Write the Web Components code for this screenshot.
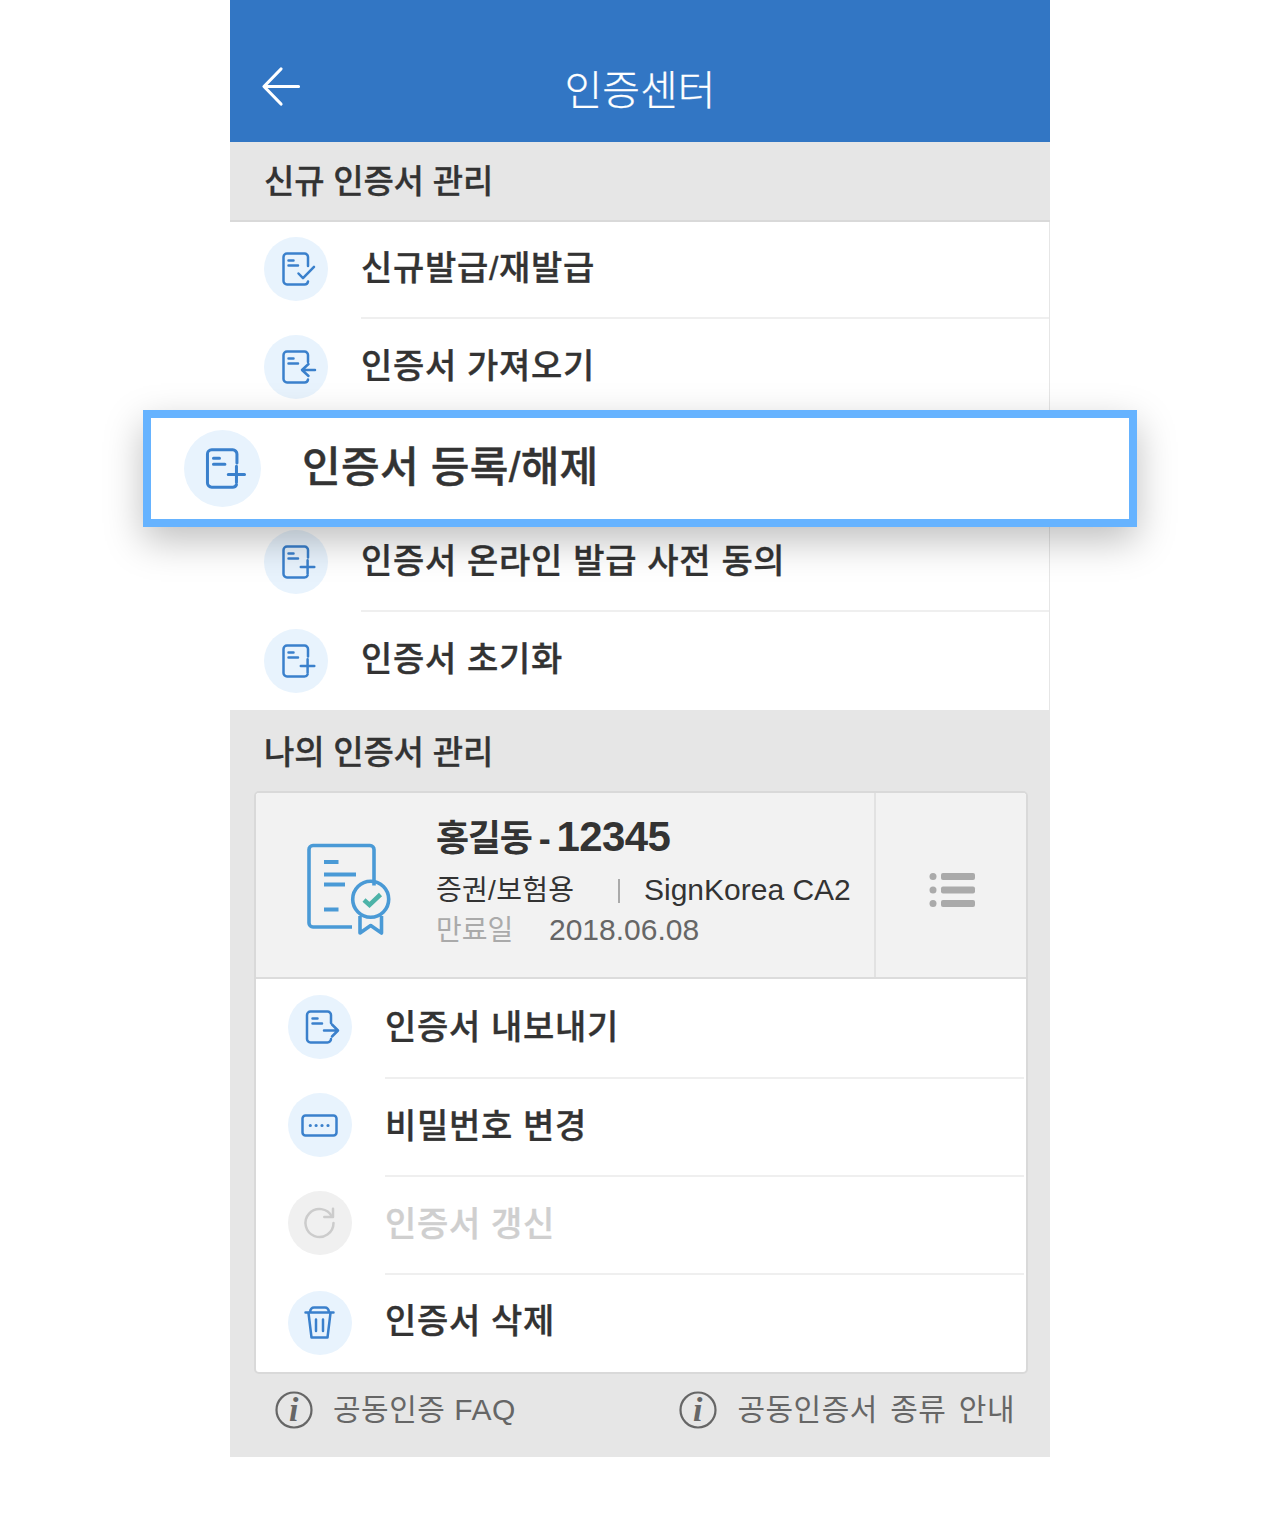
<!DOCTYPE html>
<html lang="ko">
<head>
<meta charset="utf-8">
<title>인증센터</title>
<style>
html, body { margin: 0; background: #fff; }
body {
  font-family: "Liberation Sans", "Noto Sans CJK KR", sans-serif;
  color: #333;
  height: 1525px;
  overflow: hidden;
}
cert-card b {
  font-size: 42px;
  font-weight: 700;
  letter-spacing: -.6px;
}
</style>
</head>
<body>
<cert-screen>
  <app-bar slot="bar">인증센터</app-bar>

  <section-head height="80">신규 인증서 관리</section-head>
  <menu-list>
    <menu-row icon="check" height="97" style="--lift:-4px">신규발급/재발급</menu-row>
    <menu-row icon="in">인증서 가져오기</menu-row>
    <menu-row height="97"></menu-row>
    <menu-row icon="plus">인증서 온라인 발급 사전 동의</menu-row>
    <menu-row icon="plus" last style="--lift:0px">인증서 초기화</menu-row>
  </menu-list>

  <section-head height="81" plain>나의 인증서 관리</section-head>
  <cert-card>
    <span slot="name">홍길동 - <b>12345</b></span>
    <span slot="usage">증권/보험용</span>
    <span slot="issuer">SignKorea CA2</span>
    <span slot="expiry">2018.06.08</span>
    <menu-row icon="out" height="100" inset style="--lift:-4px">인증서 내보내기</menu-row>
    <menu-row icon="keys" inset style="--lift:-6px">비밀번호 변경</menu-row>
    <menu-row icon="renew" inset disabled style="--lift:-6px">인증서 갱신</menu-row>
    <menu-row icon="trash" inset last>인증서 삭제</menu-row>
  </cert-card>

  <footer-links>
    <info-link>공동인증 FAQ</info-link>
    <info-link wide>공동인증서 종류 안내</info-link>
  </footer-links>

  <focus-row slot="overlay">인증서 등록/해제</focus-row>
</cert-screen>

<script>
"use strict";

const DOC_LINES = `<path d="M24.5 23.5h5M24.5 28.5h9.5"/>`;

// All menu icons share the same 64 unit grid, circle included.
const ICONS = {
  check: `<path d="M44 29v-9a3.5 3.5 0 0 0-3.5-3.5H23a3.5 3.5 0 0 0-3.5 3.5v24a3.5 3.5 0 0 0 3.5 3.5h17.5a3.5 3.5 0 0 0 3.5-3"/>${DOC_LINES}<path d="M34.5 36.5l4.5 4.700L50 29.800"/>`,
  in: `<path d="M44 27v-7a3.5 3.5 0 0 0-3.5-3.5H23a3.5 3.5 0 0 0-3.5 3.5v24a3.5 3.5 0 0 0 3.5 3.5h17.5a3.5 3.5 0 0 0 3.5-3"/>${DOC_LINES}<path d="M51 35H38.5M44.5 29l-6.500 6 6.500 6"/>`,
  plus: `<path d="M44 27.5V20a3.5 3.5 0 0 0-3.5-3.500H23a3.5 3.5 0 0 0-3.5 3.500v24a3.5 3.5 0 0 0 3.5 3.500h17.500a3.500 3.500 0 0 0 3.100-2"/>${DOC_LINES}<path d="M36.800 36.900h13.500M43.600 30.200v13.500"/>`,
  out: `<path d="M43 28v-8a3.5 3.5 0 0 0-3.5-3.500H22.500A3.500 3.500 0 0 0 19 20v24a3.500 3.500 0 0 0 3.500 3.500h17a3.500 3.500 0 0 0 3.500-3.500"/>${DOC_LINES}<path d="M36 35.500h13.500M44 29.500l6 6-6 6"/>`,
  keys: `<rect x="14.500" y="22.500" width="34" height="20" rx="3"/><path class="dots" d="M22.300 32.500h.01M28.100 32.500h.01M34 32.500h.01M40 32.500h.01"/>`,
  renew: `<path d="M44 25.700A14 14 0 1 0 45.500 32"/><path d="M36.300 26H45v-8.300"/>`,
  trash: `<path d="M17.500 21.500h28M22 21c.5-3 2.500-4.500 4-4.500h11c1.500 0 3.500 1.500 4 4.500"/><path d="M20.500 22l3 24.500h16l3-24.500"/><path d="M28 28.500v11.500M35 28.500v11.500"/>`,
};

class AppBar extends HTMLElement {
  constructor() {
    super();
    this.attachShadow({ mode: 'open' });
    this.shadowRoot.innerHTML = `
<style>
:host {
  display: grid;
  grid-template-columns: 1fr;
  height: 142px;
  background: #3276c4;
  color: #fff;
  position: relative;
}
.title {
  display: flex;
  justify-content: center;
  align-items: flex-start;
  padding-top: 61px;
  font-size: 41px;
  line-height: 60px;
  font-weight: 300;
  -webkit-text-stroke: .3px #fff;
}
svg {
  position: absolute;
  left: 30px;
  top: 64px;
}
</style>
<svg width="44" height="44" viewBox="0 0 44 44" fill="none" stroke="#fff" stroke-width="3.2" stroke-linecap="round" stroke-linejoin="round">
  <path d="M4.500 22.500H38.500M21 5L4 22.500 21 40"/>
</svg>
<div class="title"><slot></slot></div>
`;
  }
}
customElements.define('app-bar', AppBar);

class SectionHead extends HTMLElement {
  constructor() {
    super();
    this.attachShadow({ mode: 'open' });
    const plain = this.hasAttribute('plain');
    this.shadowRoot.innerHTML = `
<style>
:host {
  display: flex;
  align-items: center;
  box-sizing: border-box;
  height: ${this.getAttribute('height') || 80}px;
  padding: 0 0 ${plain ? '2px' : '4px'} 34px;
  background: #e6e6e6;
  ${plain ? '' : 'border-bottom: 2px solid #d9d9d9;'}
  font-size: 33px;
  font-weight: 500;
  -webkit-text-stroke: .3px #333;
  color: #333;
  letter-spacing: -.2px;
}
</style>
<slot></slot>
`;
  }
}
customElements.define('section-head', SectionHead);

class MenuIcon extends HTMLElement {
  static get observedAttributes() {
    return ['name'];
  }

  constructor() {
    super();
    this.attachShadow({ mode: 'open' });
  }

  attributeChangedCallback() {
    const name = this.getAttribute('name');
    this.shadowRoot.innerHTML = `
<style>
:host {
  display: block;
  flex: none;
  width: var(--icon-size, 64px);
  height: var(--icon-size, 64px);
  border-radius: 50%;
  background: var(--icon-bg, #e8f3fd);
}
svg {
  display: block;
  width: 100%;
  height: 100%;
  fill: none;
  stroke: var(--icon-ink, #3a80cc);
  stroke-width: 2.500;
  stroke-linecap: round;
  stroke-linejoin: round;
}
.dots {
  stroke-width: 3.200;
}
</style>
<svg viewBox="0 0 64 64">${ICONS[name] || ''}</svg>
`;
  }
}
customElements.define('menu-icon', MenuIcon);

class MenuRow extends HTMLElement {
  constructor() {
    super();
    this.attachShadow({ mode: 'open' });
    const icon = this.getAttribute('icon');
    const disabled = this.hasAttribute('disabled');
    const last = this.hasAttribute('last');
    const inset = this.hasAttribute('inset');
    const ink = disabled ? '#cfcfcf' : '#333';
    this.shadowRoot.innerHTML = `
<style>
:host {
  display: flex;
  height: ${this.getAttribute('height') || 98}px;
  padding-left: ${inset ? 32 : 34}px;
  box-sizing: border-box;
  --icon-bg: ${disabled ? '#f0f0f0' : '#e8f3fd'};
  --icon-ink: ${disabled ? '#cccccc' : '#3a80cc'};
}
menu-icon {
  align-self: center;
  margin-top: var(--lift, -2px);
}
.label {
  flex: 1;
  display: flex;
  align-items: center;
  margin-left: 33px;
  ${inset ? 'margin-right: 2px;' : ''}
  padding-bottom: ${last ? (inset ? 12 : 10) : 8}px;
  box-sizing: border-box;
  ${last ? '' : 'border-bottom: 2px solid #efefef;'}
  font-size: 34px;
  font-weight: 500;
  -webkit-text-stroke: .35px ${ink};
  letter-spacing: .7px;
  color: ${ink};
}
</style>
${icon ? `<menu-icon name="${icon}"></menu-icon>` : '<span style="width:64px"></span>'}
<div class="label"><slot></slot></div>
`;
  }
}
customElements.define('menu-row', MenuRow);

class MenuList extends HTMLElement {
  constructor() {
    super();
    this.attachShadow({ mode: 'open' });
    this.shadowRoot.innerHTML = `
<style>
:host {
  display: block;
  background: #fff;
  border-right: 1px solid #e6e6e6;
}
</style>
<slot></slot>
`;
  }
}
customElements.define('menu-list', MenuList);

class CertCard extends HTMLElement {
  constructor() {
    super();
    this.attachShadow({ mode: 'open' });
    this.shadowRoot.innerHTML = `
<style>
:host {
  display: block;
  margin: 0 22px 0 24px;
  box-sizing: border-box;
  height: 583px;
  border: 2px solid #d9d9d9;
  border-radius: 5px;
  background: #fff;
  overflow: hidden;
}
.head {
  display: flex;
  height: 186px;
  box-sizing: border-box;
  background: #f2f2f2;
  border-bottom: 2px solid #dcdcdc;
}
.main {
  flex: 1;
  display: flex;
  align-items: center;
  padding-left: 44px;
  border-right: 2px solid #e2e2e2;
}
.seal {
  flex: none;
  display: block;
  width: 100px;
  height: 100px;
  margin-top: 10px;
}
.info {
  margin-left: 36px;
  display: flex;
  flex-direction: column;
  white-space: nowrap;
}
.name {
  font-size: 36px;
  line-height: 48px;
  font-weight: 700;
  color: #333;
  letter-spacing: -1.3px;
  word-spacing: -1.5px;
  margin-bottom: 8px;
  margin-top: -6px;
}
.line {
  display: flex;
  align-items: center;
  font-size: 30px;
  line-height: 40px;
}
.usage {
  width: 184px;
  font-size: 28px;
  letter-spacing: .3px;
  color: #333;
  position: relative;
}
.usage::after {
  content: "";
  position: absolute;
  right: 0;
  top: 8px;
  width: 2px;
  height: 24px;
  background: #aaa;
}
.issuer {
  margin: -2px 0 0 24px;
  color: #333;
}
.exp-label {
  width: 113px;
  font-size: 28px;
  color: #aaa;
}
.expiry {
  margin-top: -2px;
  color: #666;
}
.more {
  flex: none;
  width: 150px;
  display: flex;
  align-items: center;
  justify-content: center;
}
.more svg {
  display: block;
  margin: 10px 0 0 4px;
}
</style>
<div class="head">
  <div class="main">
    <svg class="seal" viewBox="0 0 100 100" fill="none" stroke="#4a9ad6" stroke-width="3.6">
      <path d="M52 87H13a4 4 0 0 1-4-4V9.500a4 4 0 0 1 4-4h57a4 4 0 0 1 4 4v36"/>
      <path d="M24 22h14.500M24 34.500h32M24 44.500h21M24 69.500h14.500" stroke-width="4"/>
      <circle cx="70.700" cy="59.300" r="18"/>
      <path d="M60 76v17l10.700-7.500L81.500 93V76" stroke-linejoin="round"/>
      <path d="M64 60l5.500 5 11-10.500" stroke="#4db3a8" stroke-width="4.500"/>
    </svg>
    <div class="info">
      <div class="name"><slot name="name"></slot></div>
      <div class="line"><span class="usage"><slot name="usage"></slot></span><span class="issuer"><slot name="issuer"></slot></span></div>
      <div class="line"><span class="exp-label">만료일</span><span class="expiry"><slot name="expiry"></slot></span></div>
    </div>
  </div>
  <div class="more">
    <svg width="48" height="36" viewBox="0 0 48 36" fill="#aaa">
      <circle cx="4" cy="4.500" r="3.500"/><circle cx="4" cy="18" r="3.500"/><circle cx="4" cy="31.500" r="3.500"/>
      <rect x="12" y="1" width="34" height="7" rx="2"/><rect x="12" y="14.500" width="34" height="7" rx="2"/><rect x="12" y="28" width="34" height="7" rx="2"/>
    </svg>
  </div>
</div>
<slot></slot>
`;
  }
}
customElements.define('cert-card', CertCard);

class InfoLink extends HTMLElement {
  constructor() {
    super();
    this.attachShadow({ mode: 'open' });
    const wide = this.hasAttribute('wide');
    this.shadowRoot.innerHTML = `
<style>
:host {
  display: flex;
  align-items: center;
  gap: 20px;
  font-size: 30px;
  color: #666;
  white-space: nowrap;
  letter-spacing: .5px;
  ${wide ? 'word-spacing: 3.500px;' : ''}
}
svg {
  display: block;
  flex: none;
}
span {
  margin-top: -5px;
}
text {
  font-family: "Liberation Serif", serif;
  font-style: italic;
  font-size: 34px;
  fill: #666;
}
</style>
<svg width="38" height="38" viewBox="0 0 38 38"><circle cx="19" cy="19" r="17.500" fill="none" stroke="#666" stroke-width="2.200"/><text x="19" y="30" text-anchor="middle" font-weight="700">i</text></svg>
<span><slot></slot></span>
`;
  }
}
customElements.define('info-link', InfoLink);

class FooterLinks extends HTMLElement {
  constructor() {
    super();
    this.attachShadow({ mode: 'open' });
    this.shadowRoot.innerHTML = `
<style>
:host {
  display: flex;
  justify-content: space-between;
  align-items: flex-start;
  height: 83px;
  padding: 16px 35px 0 45px;
  box-sizing: border-box;
}
</style>
<slot></slot>
`;
  }
}
customElements.define('footer-links', FooterLinks);

class FocusRow extends HTMLElement {
  constructor() {
    super();
    this.attachShadow({ mode: 'open' });
    this.shadowRoot.innerHTML = `
<style>
:host {
  position: absolute;
  left: -87px;
  top: 410px;
  width: 994px;
  height: 117px;
  box-sizing: border-box;
  display: flex;
  align-items: center;
  gap: 41px;
  padding-left: 33px;
  background: #fff;
  border: 8px solid #66b3ff;
  box-shadow: 0 14px 36px rgba(0, 0, 0, .25);
  font-size: 42px;
  font-weight: 500;
  -webkit-text-stroke: .45px #333;
  letter-spacing: .3px;
  color: #333;
  --icon-size: 77px;
}
span {
  padding-bottom: 10px;
}
</style>
<menu-icon name="plus"></menu-icon>
<span><slot></slot></span>
`;
  }
}
customElements.define('focus-row', FocusRow);

class CertScreen extends HTMLElement {
  constructor() {
    super();
    this.attachShadow({ mode: 'open' });
    this.shadowRoot.innerHTML = `
<style>
:host {
  display: block;
  position: relative;
  width: 820px;
  height: 1457px;
  margin: 0 auto;
  background: #e6e6e6;
}
</style>
<slot name="bar"></slot>
<slot></slot>
<slot name="overlay"></slot>
`;
  }
}
customElements.define('cert-screen', CertScreen);
</script>
</body>
</html>
